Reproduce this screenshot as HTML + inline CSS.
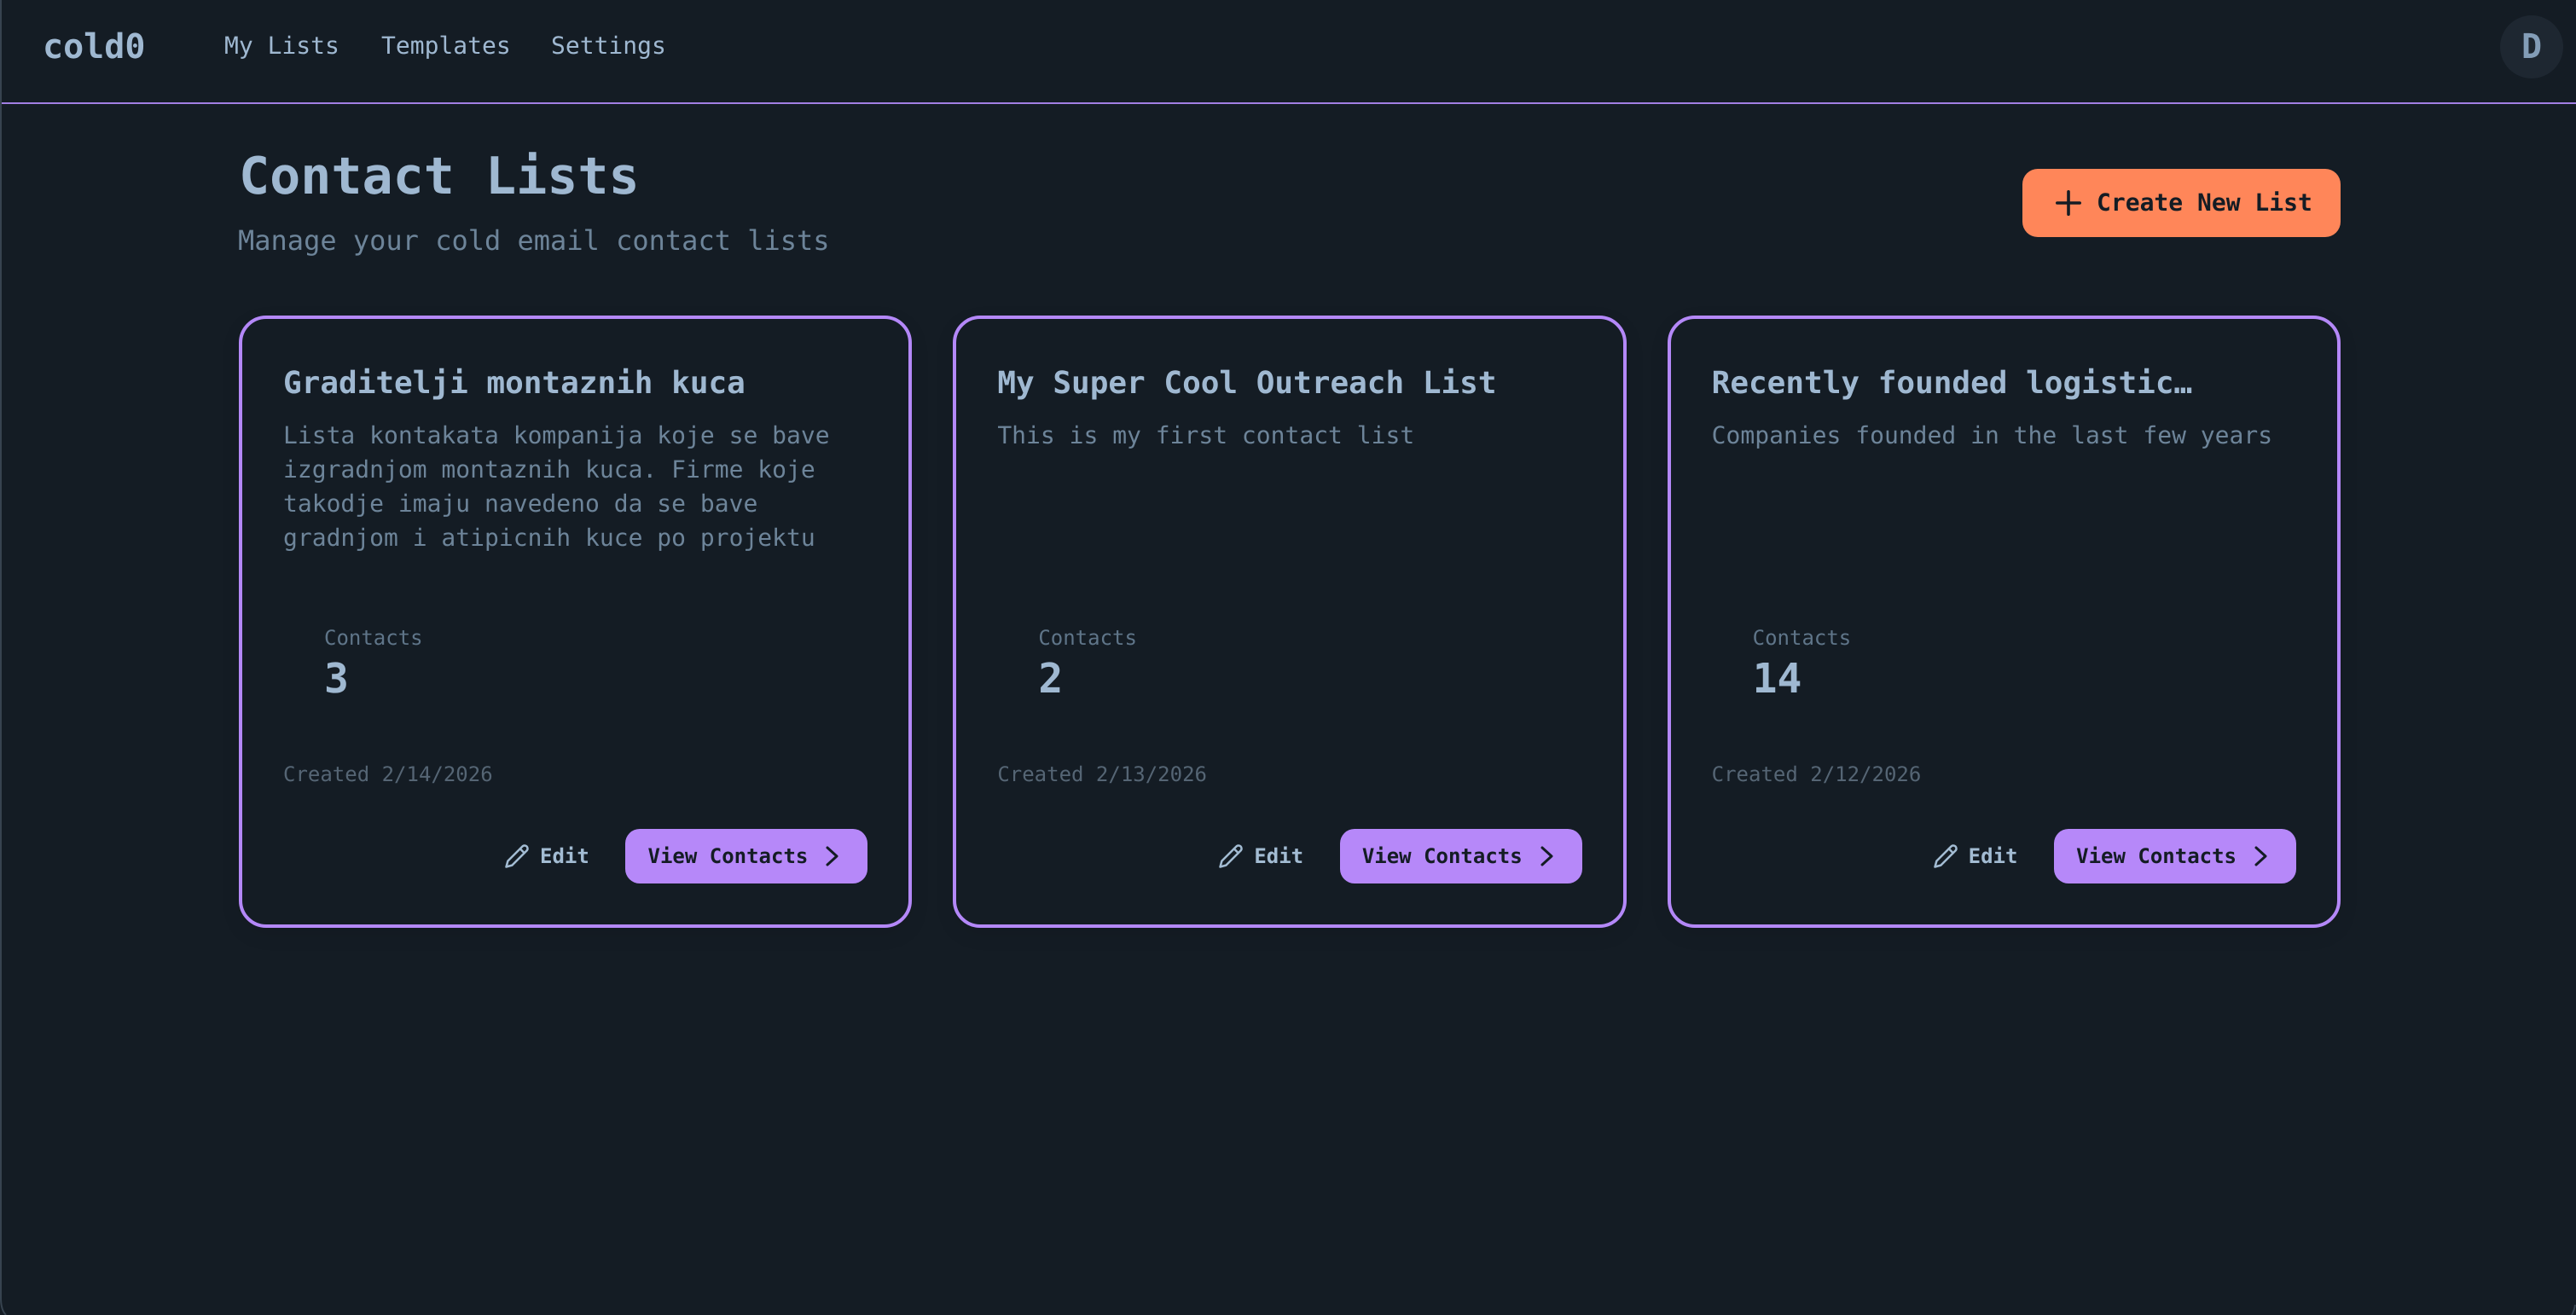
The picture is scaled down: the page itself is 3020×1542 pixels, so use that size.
<!DOCTYPE html>
<html lang="en">
<head>
<meta charset="utf-8">
<title>cold0 - Contact Lists</title>
<style>
*{box-sizing:border-box;margin:0;padding:0}
html,body{width:3020px;height:1542px;overflow:hidden;background:#141c24}
body{position:relative;font-family:"DejaVu Sans Mono","Liberation Mono",monospace;color:#9fb8d1;text-rendering:geometricPrecision}
.t{position:absolute;white-space:pre;line-height:normal}
.b{font-weight:700}
header{position:absolute;left:0;top:0;width:3020px;height:122px;border-bottom:2px solid #a27fe4}
.avatar{position:absolute;left:2931px;top:18px;width:74px;height:74px;border-radius:50%;background:#1e2731}
.cta{position:absolute;left:2371px;top:198px;width:373px;height:80px;border-radius:18px;background:#ff8659}
.card{position:absolute;top:370px;width:789.33px;height:718px;border:4px solid #b488f8;border-radius:32px;background:#141c24;box-shadow:0 8px 24px rgba(0,0,0,.08)}
.title{left:48px;top:55px;font-size:36px;font-weight:700;color:#9fb8d1}
.desc{left:48px;top:117px;font-size:28px;line-height:40px;color:#6d8499}
.lab{left:96px;top:360px;font-size:24px;color:#5f7589}
.num{left:96px;top:394px;font-size:48px;font-weight:700;color:#9fb8d1}
.date{left:48px;top:520px;font-size:24px;color:#556574}
.edit{left:349px;top:616px;font-size:24px;font-weight:700;color:#a3bcd3}
.pen{position:absolute;left:307px;top:615px;width:30px;height:30px}
.view{position:absolute;left:449px;top:598px;width:284px;height:64px;border-radius:17px;background:#b688f9}
.view .t{left:26.500px;top:18px;font-size:24px;font-weight:700;color:#141c24}
.view svg{position:absolute;left:230px;top:16px;width:30px;height:30px}
.edge{position:absolute;left:0;top:0;width:3020px;height:1542px;pointer-events:none}
</style>
</head>
<body>
<header>
  <div class="t b" style="left:50px;top:32px;font-size:40px">cold0</div>
  <div class="t" style="left:263px;top:37px;font-size:28px">My Lists</div>
  <div class="t" style="left:447px;top:37px;font-size:28px">Templates</div>
  <div class="t" style="left:646px;top:37px;font-size:28px">Settings</div>
  <div class="avatar"></div>
  <div class="t b" style="left:2956px;top:32px;font-size:40px;color:#839db7">D</div>
</header>

<h1 class="t b" style="left:280px;top:172px;font-size:60px">Contact Lists</h1>
<p class="t" style="left:279px;top:263px;font-size:32px;color:#6d8499">Manage your cold email contact lists</p>

<div class="cta">
  <svg style="position:absolute;left:37px;top:23px" width="34" height="34" viewBox="0 0 34 34" fill="none" stroke="#141c24" stroke-width="3.6" stroke-linecap="round"><path d="M17 3.800v26.400M3.800 17h26.400"/></svg>
  <div class="t b" style="left:87px;top:23px;font-size:28px;color:#141c24">Create New List</div>
</div>

<div class="card" style="left:280px">
  <div class="t title">Graditelji montaznih kuca</div>
  <div class="t desc">Lista kontakata kompanija koje se bave
izgradnjom montaznih kuca. Firme koje
takodje imaju navedeno da se bave
gradnjom i atipicnih kuce po projektu</div>
  <div class="t lab">Contacts</div>
  <div class="t num">3</div>
  <div class="t date">Created 2/14/2026</div>
  <svg class="pen" viewBox="0 0 24 24" fill="none" stroke="#a3bcd3" stroke-width="2" stroke-linecap="round" stroke-linejoin="round"><path d="M17 3a2.85 2.83 0 1 1 4 4L7.500 20.500 2 22l1.500-5.500Z"/><path d="m15 5 4 4"/></svg>
  <div class="t edit">Edit</div>
  <div class="view"><div class="t">View Contacts</div><svg viewBox="0 0 30 30" fill="none" stroke="#141c24" stroke-width="3" stroke-linecap="round" stroke-linejoin="round"><path d="M7 6l11 10L7 26"/></svg></div>
</div>

<div class="card" style="left:1117.330px">
  <div class="t title">My Super Cool Outreach List</div>
  <div class="t desc">This is my first contact list</div>
  <div class="t lab">Contacts</div>
  <div class="t num">2</div>
  <div class="t date">Created 2/13/2026</div>
  <svg class="pen" viewBox="0 0 24 24" fill="none" stroke="#a3bcd3" stroke-width="2" stroke-linecap="round" stroke-linejoin="round"><path d="M17 3a2.85 2.83 0 1 1 4 4L7.500 20.500 2 22l1.500-5.500Z"/><path d="m15 5 4 4"/></svg>
  <div class="t edit">Edit</div>
  <div class="view" style="left:450px"><div class="t" style="left:25.500px">View Contacts</div><svg viewBox="0 0 30 30" fill="none" stroke="#141c24" stroke-width="3" stroke-linecap="round" stroke-linejoin="round"><path d="M7 6l11 10L7 26"/></svg></div>
</div>

<div class="card" style="left:1954.670px">
  <div class="t title">Recently founded logistic…</div>
  <div class="t desc">Companies founded in the last few years</div>
  <div class="t lab">Contacts</div>
  <div class="t num">14</div>
  <div class="t date">Created 2/12/2026</div>
  <svg class="pen" viewBox="0 0 24 24" fill="none" stroke="#a3bcd3" stroke-width="2" stroke-linecap="round" stroke-linejoin="round"><path d="M17 3a2.85 2.83 0 1 1 4 4L7.500 20.500 2 22l1.500-5.500Z"/><path d="m15 5 4 4"/></svg>
  <div class="t edit">Edit</div>
  <div class="view"><div class="t">View Contacts</div><svg viewBox="0 0 30 30" fill="none" stroke="#141c24" stroke-width="3" stroke-linecap="round" stroke-linejoin="round"><path d="M7 6l11 10L7 26"/></svg></div>
</div>

<svg class="edge" viewBox="0 0 3020 1542" fill="none" stroke="#37434f" stroke-width="2"><path d="M1 0V1522Q1 1536 7 1542"/><path d="M3019 1530Q3018 1537 3015 1542"/></svg>
</body>
</html>
